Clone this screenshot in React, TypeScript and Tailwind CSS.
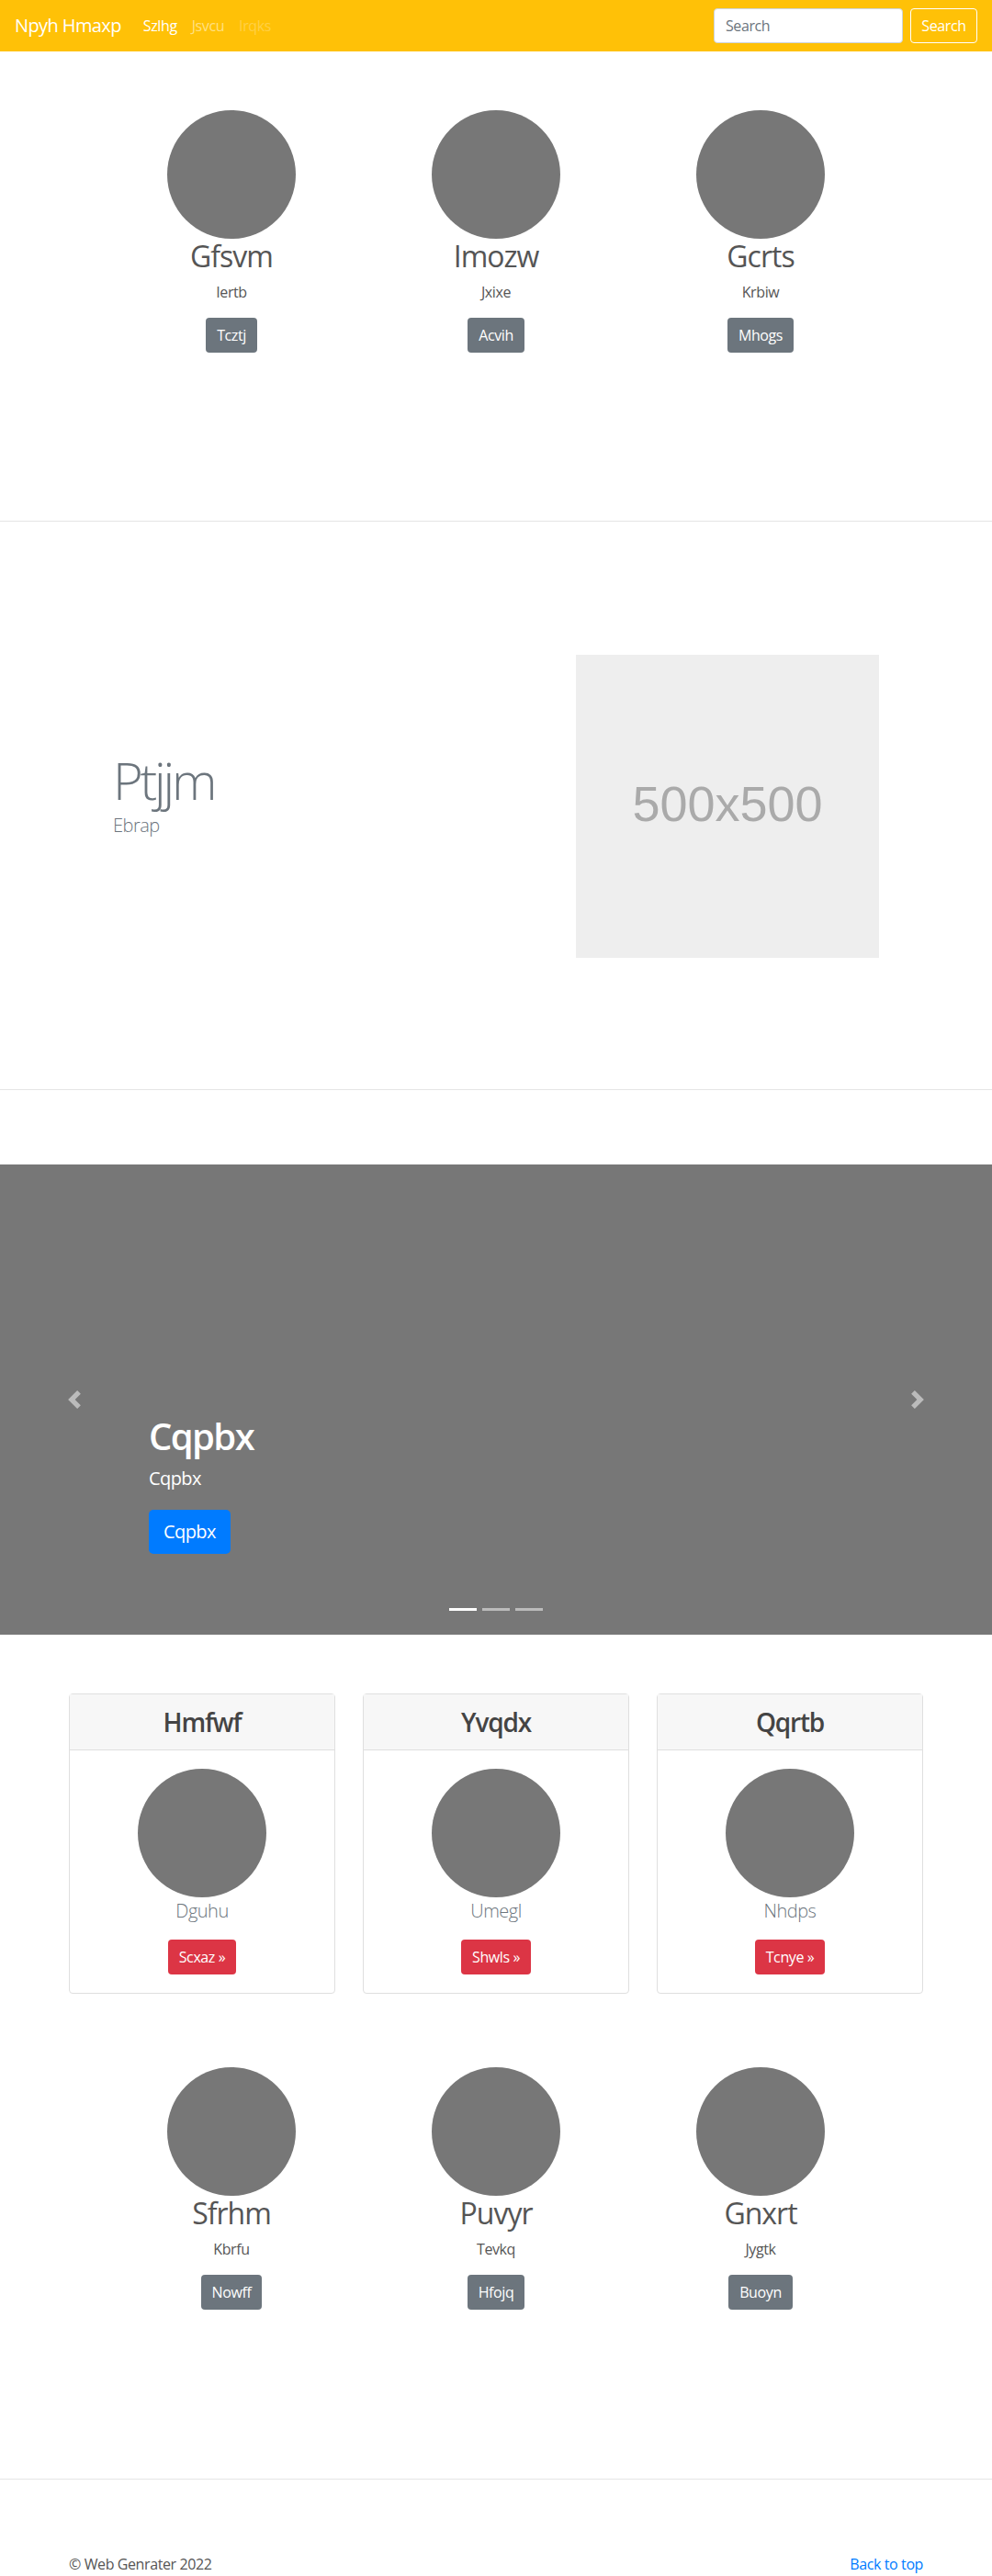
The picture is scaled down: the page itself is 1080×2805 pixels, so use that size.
import React from "react";

type Item = { t: string; s: string; b: string };

const row1: Item[] = [
  { t: "Gfsvm", s: "Iertb", b: "Tcztj" },
  { t: "Imozw", s: "Jxixe", b: "Acvih" },
  { t: "Gcrts", s: "Krbiw", b: "Mhogs" },
];

const row3: Item[] = [
  { t: "Sfrhm", s: "Kbrfu", b: "Nowff" },
  { t: "Puvyr", s: "Tevkq", b: "Hfojq" },
  { t: "Gnxrt", s: "Jygtk", b: "Buoyn" },
];

const cards: Item[] = [
  { t: "Hmfwf", s: "Dguhu", b: "Scxaz »" },
  { t: "Yvqdx", s: "Umegl", b: "Shwls »" },
  { t: "Qqrtb", s: "Nhdps", b: "Tcnye »" },
];

function Marketing({ items }: { items: Item[] }) {
  return (
    <div className="mx-auto grid w-[864px] grid-cols-3">
      {items.map((it) => (
        <div key={it.t} className="px-[15px] text-center">
          <div className="mx-auto h-[140px] w-[140px] rounded-full bg-[#777777]" />
          <h2 className="mb-2 text-[32px] font-normal leading-[38px] tracking-[-1px] text-[#555555]">{it.t}</h2>
          <p className="mb-4 text-base leading-6 text-[#555555]">{it.s}</p>
          <button className="h-[38px] rounded bg-[#6c757d] px-3 text-base leading-6 text-white">
            {it.b}
          </button>
        </div>
      ))}
    </div>
  );
}

function Chevron({ dir }: { dir: "prev" | "next" }) {
  return (
    <svg width="20" height="20" viewBox="0 0 8 8" fill="#ffffff" className="opacity-50">
      {dir === "prev" ? (
        <path d="M5.25 0l-4 4 4 4 1.5-1.5L4.25 4l2.5-2.5L5.25 0z" />
      ) : (
        <path d="M2.75 0l-1.5 1.5L3.75 4l-2.5 2.5L2.75 8l4-4-4-4z" />
      )}
    </svg>
  );
}

export default function App() {
  return (
    <div className="w-full bg-white font-['Open_Sans','Noto_Sans',sans-serif] tracking-[-0.4px] text-[#555555]">
      {/* Navbar */}
      <nav className="flex h-14 items-center bg-[#ffc107] px-4">
        <a className="mr-4 text-[20px] leading-[30px] tracking-[-0.6px] text-white">Npyh Hmaxp</a>
        <ul className="flex">
          <li>
            <a className="block px-2 text-base leading-6 text-white">Szlhg</a>
          </li>
          <li>
            <a className="block px-2 text-base leading-6 text-[#ffe083]">Jsvcu</a>
          </li>
          <li>
            <a className="block px-2 text-base leading-6 text-[#ffd045]">Irqks</a>
          </li>
        </ul>
        <form className="ml-auto flex items-center">
          <input
            placeholder="Search"
            className="mr-2 h-[38px] w-[206px] rounded border border-[#ced4da] bg-white px-3 text-base text-[#495057] outline-none placeholder:text-[#6c757d]"
          />
          <button type="button" className="h-[38px] w-[73px] rounded border border-white text-base text-white">
            Search
          </button>
        </form>
      </nav>

      {/* Section 1 */}
      <section className="pt-16">
        <Marketing items={row1} />
      </section>

      <hr className="mt-[183px] border-[#e5e5e5]" />

      {/* Section 2 featurette */}
      <section className="pt-[145px] pb-[143px]">
        <div className="mx-auto flex w-[864px]">
          <div className="w-[504px] px-[15px] pt-[108px]">
            <h2 className="text-[56px] font-light leading-none tracking-[-3.2px] text-[#6c757d]">Ptjjm</h2>
            <p className="mt-[7px] text-[20px] font-light leading-[30px] tracking-[-0.5px] text-[#6c757d]">Ebrap</p>
          </div>
          <div className="w-[360px] px-[15px]">
            <div className="flex h-[330px] w-[330px] items-center justify-center bg-[#eeeeee]">
              <span className="-mt-[6px] font-['Liberation_Sans',Arial,sans-serif] text-[54px] tracking-normal text-[#aaaaaa]">
                500x500
              </span>
            </div>
          </div>
        </div>
      </section>

      <hr className="border-[#e5e5e5]" />

      {/* Carousel */}
      <section className="relative mt-[81px] h-[512px] bg-[#777777]">
        <div className="absolute inset-y-0 left-0 flex w-[15%] items-center justify-center">
          <Chevron dir="prev" />
        </div>
        <div className="absolute inset-y-0 right-0 flex w-[15%] items-center justify-center">
          <Chevron dir="next" />
        </div>
        <div className="absolute left-[15%] right-[15%] bottom-[88px] text-left text-white">
          <h1 className="mb-[7px] text-[40px] font-semibold leading-[48px] tracking-[-1.6px]">Cqpbx</h1>
          <p className="mb-[19px] text-[20px] leading-[30px] tracking-[-0.6px]">Cqpbx</p>
          <button className="h-12 rounded-[5px] bg-[#007bff] px-4 text-[20px] leading-[30px] tracking-[-0.6px] text-white">
            Cqpbx
          </button>
        </div>
        <div className="absolute inset-x-0 bottom-[26px] flex justify-center">
          <span className="mx-[3px] h-[3px] w-[30px] bg-white" />
          <span className="mx-[3px] h-[3px] w-[30px] bg-white opacity-50" />
          <span className="mx-[3px] h-[3px] w-[30px] bg-white opacity-50" />
        </div>
      </section>

      {/* Cards */}
      <section className="mx-auto mt-16 w-[960px] px-[15px]">
        <div className="grid grid-cols-3 gap-[30px]">
          {cards.map((c) => (
            <div key={c.t} className="rounded border border-[#dfdfdf] bg-white">
              <div className="flex h-[61px] items-center justify-center border-b border-[#dfdfdf] bg-[#f7f7f7]">
                <h3 className="text-[28px] font-semibold leading-[34px] tracking-[-1.2px] text-[#444444]">{c.t}</h3>
              </div>
              <div className="p-5 text-center">
                <div className="mx-auto h-[140px] w-[140px] rounded-full bg-[#777777]" />
                <p className="mb-4 text-[20px] font-light leading-[30px] tracking-[-0.5px] text-[#6c757d]">{c.s}</p>
                <button className="h-[38px] rounded bg-[#dc3545] px-3 text-base leading-6 text-white">
                  {c.b}
                </button>
              </div>
            </div>
          ))}
        </div>
      </section>

      {/* Section 3 */}
      <section className="mt-20">
        <Marketing items={row3} />
      </section>

      <hr className="mt-[184px] border-[#e5e5e5]" />

      {/* Footer */}
      <footer className="mx-auto flex w-[960px] justify-between px-[15px] pt-20">
        <p className="text-base leading-6 text-[#555555]">© Web Genrater 2022</p>
        <a className="text-base leading-6 text-[#007bff]">Back to top</a>
      </footer>
    </div>
  );
}
